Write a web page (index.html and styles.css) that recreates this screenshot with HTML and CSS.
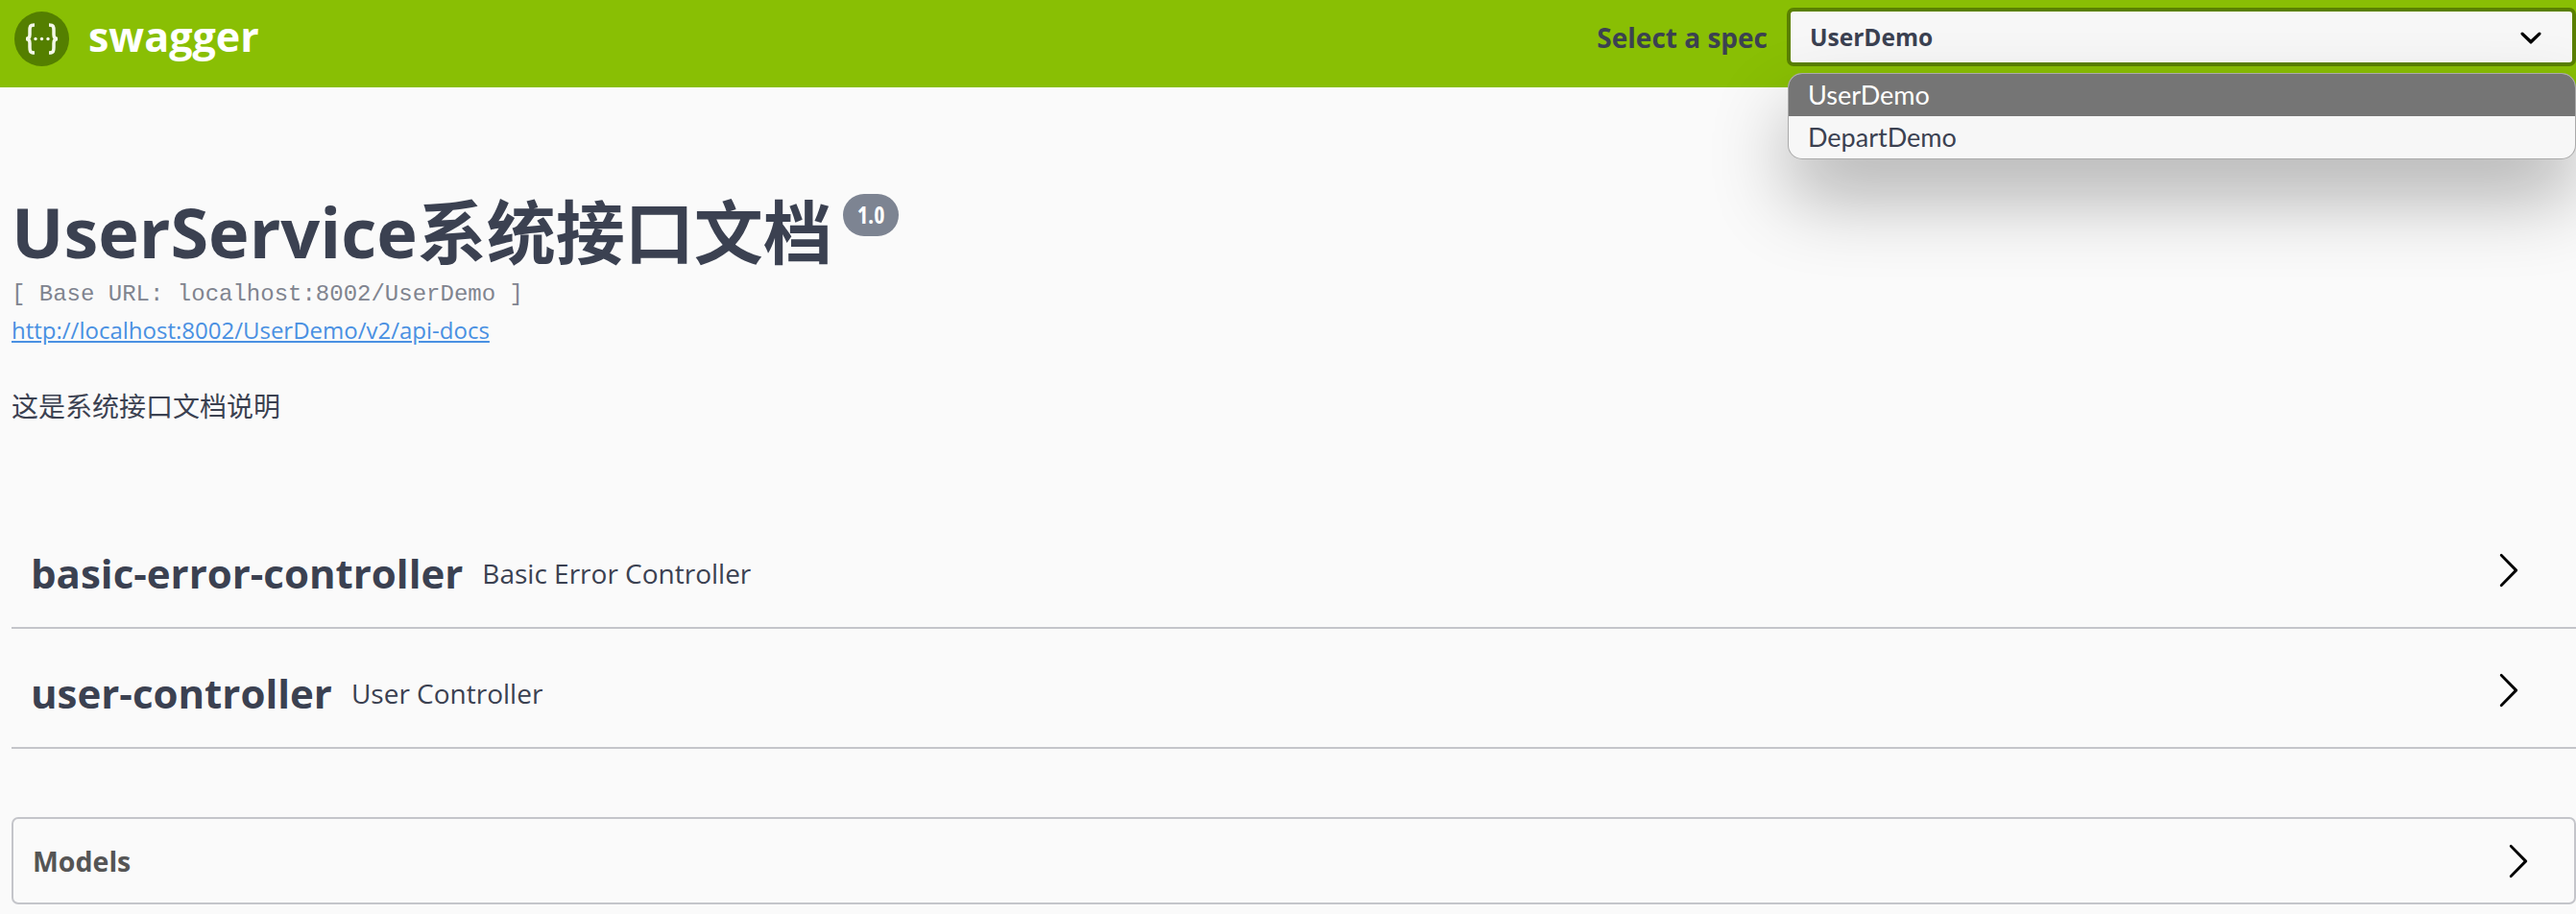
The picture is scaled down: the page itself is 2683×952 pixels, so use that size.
FILE: index.html
```html
<!DOCTYPE html>
<html lang="en">
<head>
  <meta charset="UTF-8">
  <meta name="viewport" content="width=device-width, initial-scale=1.0">
  <title>Swagger UI</title>
  <link rel="stylesheet" href="styles.css">
</head>
<body>
  <header class="topbar">
    <a class="brand">
      <svg class="brand-logo" viewBox="0 0 57 57">
        <circle cx="28.5" cy="28.5" r="28.5" fill="#547f00"/>
        <path d="M21 14c-5 0-5 2-5 6v4c0 3-1 4.500-4 4.500 3 0 4 1.500 4 4.500v4c0 4 0 6 5 6M36 14c5 0 5 2 5 6v4c0 3 1 4.500 4 4.500-3 0-4 1.500-4 4.500v4c0 4 0 6-5 6" fill="none" stroke="#f4f8e8" stroke-width="3.500"/>
        <circle cx="22" cy="28.500" r="1.700" fill="#f4f8e8"/>
        <circle cx="28.500" cy="28.500" r="1.700" fill="#f4f8e8"/>
        <circle cx="35" cy="28.500" r="1.700" fill="#f4f8e8"/>
      </svg>
      <span class="brand-name">swagger</span>
    </a>
    <div class="spec-picker">
      <label>Select a spec</label>
      <div class="select">
        <span>UserDemo</span>
        <svg class="select-arrow" viewBox="0 0 20 20"><path d="M13.418 7.859a.695.695 0 0 1 .978 0 .68.68 0 0 1 0 .969l-3.908 3.83a.697.697 0 0 1-.979 0l-3.908-3.83a.68.68 0 0 1 0-.969.695.695 0 0 1 .978 0L10 11l3.418-3.141z"/></svg>
      </div>
    </div>
    <ul class="select-menu">
      <li class="active">UserDemo</li>
      <li>DepartDemo</li>
    </ul>
  </header>

  <main class="wrapper">
    <section class="info">
      <h1 class="title">UserService系统接口文档<span class="version">1.0</span></h1>
      <div class="base-url">[ Base URL: localhost:8002/UserDemo ]</div>
      <a class="docs-link" href="#">http://localhost:8002/UserDemo/v2/api-docs</a>
      <p class="description">这是系统接口文档说明</p>
    </section>

    <section class="tags">
      <div class="tag">
        <h4>basic-error-controller</h4>
        <small>Basic Error Controller</small>
        <svg class="arrow" viewBox="0 0 20 20"><path d="M13.25 10L6.109 2.58a.697.697 0 0 1 0-.979.68.68 0 0 1 .969 0l7.83 7.908a.697.697 0 0 1 0 .979l-7.83 7.908a.68.68 0 0 1-.969 0 .697.697 0 0 1 0-.979L13.25 10z"/></svg>
      </div>
      <div class="tag">
        <h4>user-controller</h4>
        <small>User Controller</small>
        <svg class="arrow" viewBox="0 0 20 20"><path d="M13.25 10L6.109 2.58a.697.697 0 0 1 0-.979.68.68 0 0 1 .969 0l7.83 7.908a.697.697 0 0 1 0 .979l-7.83 7.908a.68.68 0 0 1-.969 0 .697.697 0 0 1 0-.979L13.25 10z"/></svg>
      </div>
    </section>

    <section class="models">
      <h4>Models</h4>
      <svg class="arrow" viewBox="0 0 20 20"><path d="M13.25 10L6.109 2.58a.697.697 0 0 1 0-.979.68.68 0 0 1 .969 0l7.83 7.908a.697.697 0 0 1 0 .979l-7.83 7.908a.68.68 0 0 1-.969 0 .697.697 0 0 1 0-.979L13.25 10z"/></svg>
    </section>
  </main>
</body>
</html>
```

FILE: styles.css
```css
body {
  margin: 0;
  background: #fafafa;
  color: #3b4151;
  font-family: "Open Sans", "Noto Sans CJK SC", sans-serif;
  overflow: hidden;
}

.topbar {
  position: relative;
  display: flex;
  justify-content: space-between;
  align-items: flex-start;
  height: 91px;
  padding: 8px 0 0 15px;
  box-sizing: border-box;
  background: #89bf04;
}

.brand {
  display: flex;
  align-items: center;
  gap: 20px;
  margin-top: 4px;
  color: #fff;
  font-size: 43px;
  font-weight: 700;
}

.brand-name {
  margin-top: -6px;
  line-height: 57px;
}

.brand-logo {
  width: 57px;
  height: 57px;
}

.spec-picker {
  display: flex;
  align-items: center;
  gap: 20px;
  font-weight: 700;
}

.spec-picker label {
  font-size: 28px;
}

.select {
  display: flex;
  justify-content: space-between;
  align-items: center;
  box-sizing: border-box;
  width: 822px;
  height: 61px;
  padding: 0 20px;
  background: #f7f7f7;
  border: 4px solid #5a8000;
  border-radius: 7px;
  font-size: 24.5px;
}

.select-arrow {
  width: 46px;
  height: 46px;
}

.select-menu {
  position: absolute;
  top: 77px;
  right: 1px;
  width: 819px;
  margin: 0;
  padding: 0;
  overflow: hidden;
  list-style: none;
  background: #f7f7f7;
  border-radius: 14px;
  box-shadow: 0 0 0 1px #aaa, 0 40px 80px rgba(0, 0, 0, 0.3);
  font-family: "Lato", sans-serif;
  font-size: 27px;
}

.select-menu li {
  height: 44px;
  padding-left: 20px;
  line-height: 44px;
}

.select-menu .active {
  background: #757575;
  color: #fff;
}

.wrapper {
  padding-left: 12px;
}

.info {
  padding-top: 100px;
}

.title {
  display: flex;
  align-items: flex-start;
  gap: 11px;
  margin: 0;
  font-size: 72px;
  font-weight: 700;
  line-height: 100px;
}

.version {
  margin-top: 11px;
  padding: 0 15px;
  background: #7d8492;
  border-radius: 22px;
  color: #fff;
  font-size: 24px;
  font-stretch: 85%;
  line-height: 44px;
}

.base-url {
  color: #80848f;
  font-family: "Liberation Mono", monospace;
  font-size: 24px;
  line-height: 32px;
}

.docs-link {
  display: block;
  margin-top: 5px;
  color: #4990e2;
  font-size: 24px;
  line-height: 32px;
}

.description {
  margin: 43px 0 0;
  font-size: 28px;
  line-height: 40px;
}

.tags {
  margin-top: 87px;
}

.tag {
  display: flex;
  align-items: center;
  box-sizing: border-box;
  height: 125px;
  padding: 4px 51px 0 20px;
  border-bottom: 2px solid #c4c5ca;
}

.tag h4 {
  margin: 6px 0 0;
  font-size: 42px;
  font-weight: 700;
}

.tag small {
  flex: 1;
  margin: 6px 0 0 20px;
  font-size: 28px;
}

.arrow {
  width: 40px;
  height: 40px;
}

.models {
  display: flex;
  justify-content: space-between;
  align-items: center;
  box-sizing: border-box;
  height: 91px;
  margin-top: 71px;
  padding: 0 39px 0 20px;
  border: 2px solid #c4c5ca;
  border-radius: 7px;
}

.models h4 {
  margin: 0;
  color: #555;
  font-size: 28.5px;
  font-weight: 700;
}
```
